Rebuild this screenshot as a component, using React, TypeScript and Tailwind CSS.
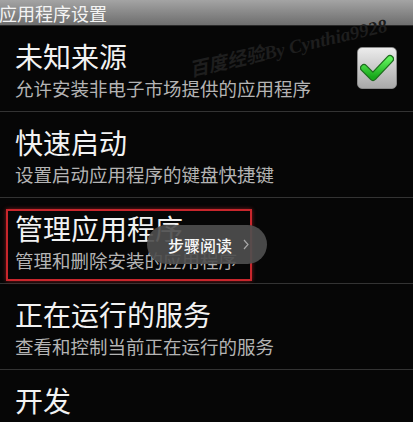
import React from "react";

const rows = [
  { title: "未知来源", sub: "允许安装非电子市场提供的应用程序", check: true },
  { title: "快速启动", sub: "设置启动应用程序的键盘快捷键" },
  { title: "管理应用程序", sub: "管理和删除安装的应用程序" },
  { title: "正在运行的服务", sub: "查看和控制当前正在运行的服务" },
  { title: "开发", sub: "" },
];

function Check() {
  return (
    <div className="w-[40px] h-[42px] rounded-[5px] bg-gradient-to-b from-[#ececec] to-[#a9a9a9] border border-[#8a8a8a] flex items-center justify-center shrink-0 mr-[16px]">
      <svg width="34" height="30" viewBox="0 0 34 30">
        <defs>
          <linearGradient id="g" x1="0" y1="0" x2="0" y2="1">
            <stop offset="0" stopColor="#5ef05a" />
            <stop offset="1" stopColor="#17a81a" />
          </linearGradient>
        </defs>
        <path
          d="M4 15 L13 24 L30 6"
          fill="none"
          stroke="#1d6b1d"
          strokeWidth="8"
          strokeLinecap="round"
          strokeLinejoin="round"
        />
        <path
          d="M4 15 L13 24 L30 6"
          fill="none"
          stroke="url(#g)"
          strokeWidth="5.5"
          strokeLinecap="round"
          strokeLinejoin="round"
        />
      </svg>
    </div>
  );
}

export default function App() {
  return (
    <div
      className="relative w-[413px] h-[422px] overflow-hidden bg-[#060606]"
      style={{ fontFamily: '"Noto Sans CJK SC", "Noto Sans", sans-serif' }}
    >
      <div className="h-[26px] bg-gradient-to-b from-[#a4a4a4] to-[#6e6e6e] flex items-center border-b border-[#2a2a2a]">
        <span className="text-[18px] leading-[26px] text-[#f4f4f4] -ml-[1px]">应用程序设置</span>
      </div>
      <div className="flex flex-col">
        {rows.map((r, i) => (
          <div key={i} className="flex flex-col">
            <div className="h-[85px] flex items-start justify-between">
              <div className="flex flex-col pl-[15px] pt-[12px]">
                <div className="text-[28px] leading-[36px] text-[#f2f2f2]">{r.title}</div>
                {r.sub && (
                  <div className="text-[18.5px] leading-[24px] mt-[2px] text-[#b4b4b4]">{r.sub}</div>
                )}
              </div>
              {r.check && (
                <div className="self-center mt-[-2px]">
                  <Check />
                </div>
              )}
            </div>
            <div className="h-[1px] bg-[#333333]" />
          </div>
        ))}
      </div>

      <div
        className="absolute left-[190px] top-[60px] text-[#1e1e1e] italic font-bold text-[19px] leading-[22px] whitespace-nowrap origin-left"
        style={{ transform: "rotate(-13deg)", fontFamily: '"Liberation Serif", "Noto Sans CJK SC", serif' }}
      >
        百度经验By Cynthia9928
      </div>

      <div className="absolute left-[6px] top-[209px] w-[246px] h-[72px] border-2 border-[#c8262c] shadow-[0_0_4px_rgba(200,38,44,0.6)]" />

      <div className="absolute left-[147px] top-[225px] w-[120px] h-[39px] rounded-full bg-[rgba(78,78,78,0.92)] flex items-center pl-[21px]">
        <span className="text-[16px] leading-[20px] font-medium text-[#f8f8f8]">步骤阅读</span>
        <svg className="ml-[11px]" width="6" height="11" viewBox="0 0 6 11">
          <path d="M1 1 L5 5.5 L1 10" fill="none" stroke="#a8a8a8" strokeWidth="1.2" />
        </svg>
      </div>
    </div>
  );
}
